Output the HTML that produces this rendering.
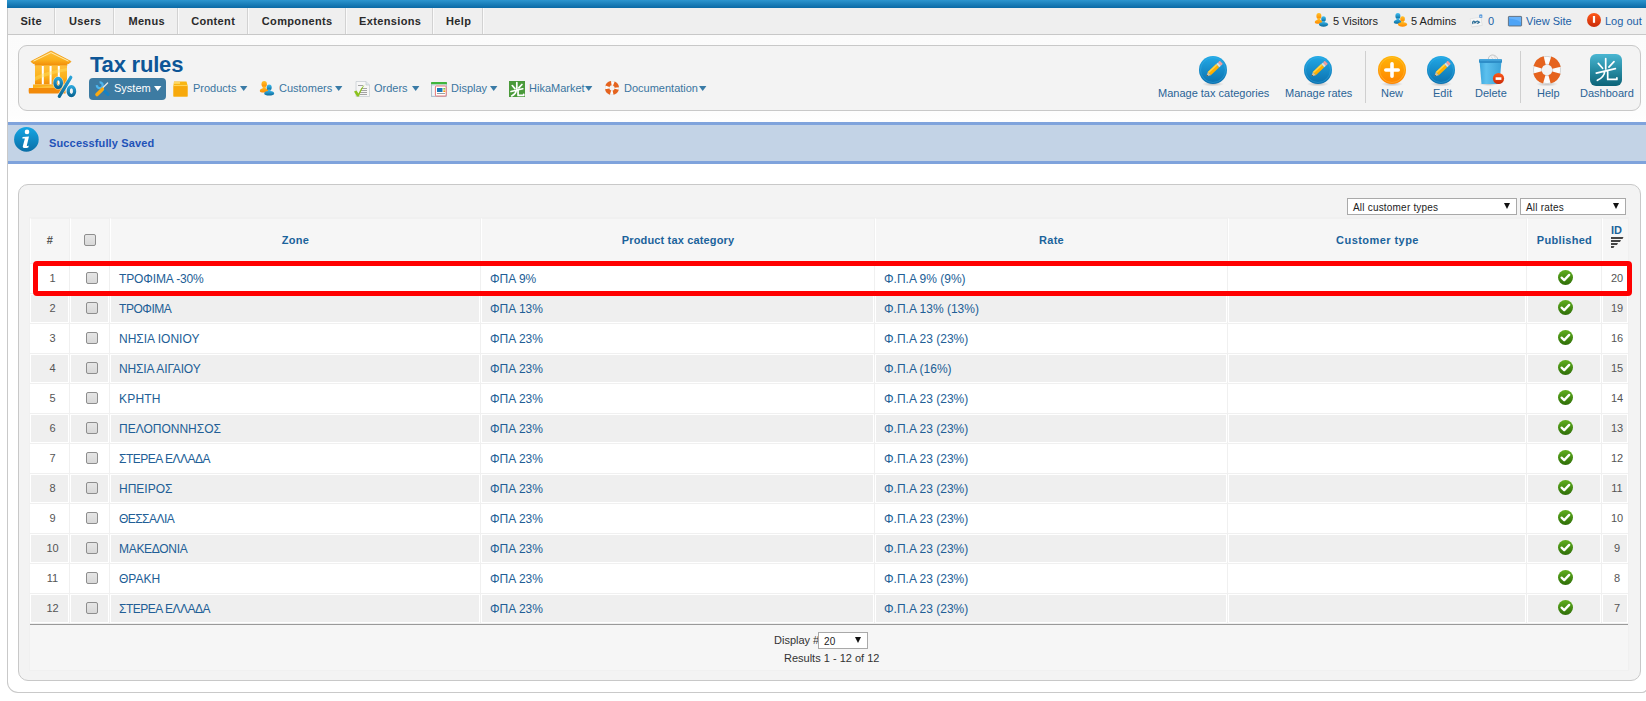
<!DOCTYPE html>
<html><head><meta charset="utf-8">
<style>
*{box-sizing:border-box}
html,body{margin:0;padding:0}
body{width:1646px;height:701px;overflow:hidden;position:relative;background:#fff;font-family:"Liberation Sans",sans-serif;font-size:11px;color:#333}
.abs{position:absolute}
.t{position:absolute;white-space:nowrap;line-height:11px}
svg.ic{position:absolute;overflow:visible}
#topbar{left:7px;top:0;width:1639px;height:8px;background:linear-gradient(#2c95cf,#0a69a5)}
#menubar{left:7px;top:8px;width:1639px;height:27px;background:#efefef;border-left:1px solid #c9c9c9;border-bottom:1px solid #c8c8c8}
.mi{position:absolute;top:0;height:26px;line-height:26px;font-weight:bold;font-size:11px;color:#2a2a2a;text-align:center;letter-spacing:0.35px;text-indent:0.35px}
.msep{position:absolute;top:0;height:26px;width:2px;border-left:1px solid #d2d2d2;border-right:1px solid #fafafa}
#outer{left:7px;top:35px;width:1641px;height:658px;border:1px solid #c9c9c9;border-top:none;border-radius:0 0 6px 11px;background:linear-gradient(#fbfbfb 0px,#fdfdfd 80px,#fff 90px)}
#hdr{left:18px;top:45px;width:1623px;height:66px;background:#f3f3f3;border:1px solid #c8c8c8;border-radius:9px}
#title{left:90px;top:54px;font-size:22px;font-weight:bold;color:#0d5697;letter-spacing:-0.2px;line-height:22px}
#sysbtn{left:89px;top:78px;width:77px;height:22px;background:#3d7ba2;border-radius:4px}
.sub{color:#3a75a0}
.tri{position:absolute;width:0;height:0;border-left:3.5px solid transparent;border-right:3.5px solid transparent;border-top:5px solid #3a7ba6}
.tb{color:#2a6396}
.tsep{position:absolute;top:51px;width:1px;height:52px;background:#cfcfcf}
#msg{left:8px;top:122px;width:1640px;height:42px;background:#c3d3e6;border-top:3px solid #7fa3dc;border-bottom:3px solid #7fa3dc}
#msgtext{left:49px;top:138px;font-size:11px;font-weight:bold;color:#1f52b8;letter-spacing:0.15px}
#box{left:18px;top:184px;width:1623px;height:497px;background:#f3f3f3;border:1px solid #c8c8c8;border-radius:10px}
.sel{position:absolute;height:17px;background:#fff;border:1px solid #a9a9a9;font-size:10px;color:#222;line-height:15px;padding-top:1px;padding-left:5px;letter-spacing:0.2px}
.sel .ar{position:absolute;right:6px;top:4px;width:0;height:0;border-left:3px solid transparent;border-right:3px solid transparent;border-top:6px solid #111}
table.al{position:absolute;left:29px;top:217px;width:1600px;border-collapse:separate;border-spacing:1px;table-layout:fixed;background:#f0f0f0}
table.al th{height:45px;background:#f6f6f6;border-left:1px solid #fff;border-top:1px solid #f0f0f0;padding:0 0 2px 0;font-size:11px;font-weight:bold;color:#1b639b;text-align:center;letter-spacing:0.3px}
table.al td{height:29px;border:1px solid #fff;padding:0;font-size:12px;vertical-align:middle}
table.al tr.r0 td{background:#fff}
table.al tr.r1 td{background:#efefef}
td.num{text-align:center;color:#555;font-size:11px!important;padding-left:6px!important;padding-bottom:2px!important}
td.c{text-align:center;padding-left:4px!important}
td.pub{text-align:center;padding-left:3px!important}
td.c .cb{position:relative;top:-1px}
td.pub svg{position:relative;top:-1px}
td.lk{color:#215e96;padding-left:8px!important}
td.id{text-align:center;color:#555;font-size:11px!important;padding-left:4px!important;padding-bottom:2px!important}
.cb{display:inline-block;width:12px;height:12px;border:1px solid #8e8e8e;border-radius:2px;background:linear-gradient(#e6e6e6,#d8d8d8);vertical-align:middle}
table.al td svg{vertical-align:middle;display:inline-block}
table.al tfoot td{height:46px;background:#f6f6f6;border:none;border-top:1px solid #9a9a9a;text-align:center;color:#333;font-size:11px}
#redbox{left:33px;top:261px;width:1599px;height:35px;border:5px solid #ff0000;border-radius:4px}
</style></head><body>
<svg width="0" height="0" style="position:absolute">
<defs>
<linearGradient id="gBlue" x1="0" y1="0" x2="0" y2="1"><stop offset="0" stop-color="#22a9e6"/><stop offset="1" stop-color="#0b70ae"/></linearGradient>
<linearGradient id="gOrange" x1="0" y1="0" x2="0" y2="1"><stop offset="0" stop-color="#ffb508"/><stop offset="1" stop-color="#ff8400"/></linearGradient>
<linearGradient id="gTeal" x1="0" y1="0" x2="0" y2="1"><stop offset="0" stop-color="#4ab6d2"/><stop offset="0.45" stop-color="#2a90a8"/><stop offset="1" stop-color="#0d6377"/></linearGradient>
<linearGradient id="gBank" x1="0" y1="0" x2="0" y2="1"><stop offset="0" stop-color="#ffbf3a"/><stop offset="0.6" stop-color="#fbb21c"/><stop offset="1" stop-color="#f28c08"/></linearGradient>
<linearGradient id="gPct" x1="0" y1="0" x2="0" y2="1"><stop offset="0" stop-color="#2aa3d8"/><stop offset="1" stop-color="#0b6896"/></linearGradient>
<linearGradient id="gRed" x1="0" y1="0" x2="0" y2="1"><stop offset="0" stop-color="#ff5a1a"/><stop offset="1" stop-color="#c92a08"/></linearGradient>
<linearGradient id="gTrash" x1="0" y1="0" x2="1" y2="0"><stop offset="0" stop-color="#3ba6dc"/><stop offset="0.3" stop-color="#5cc0ee"/><stop offset="1" stop-color="#3aa2d8"/></linearGradient>
<linearGradient id="gPB" x1="0" y1="0" x2="0" y2="1"><stop offset="0" stop-color="#3fc0f5"/><stop offset="1" stop-color="#0b6a9a"/></linearGradient>
<linearGradient id="gPO" x1="0" y1="0" x2="0" y2="1"><stop offset="0" stop-color="#ffc22a"/><stop offset="1" stop-color="#ff8a00"/></linearGradient>
<radialGradient id="gShadow" cx="0.5" cy="0.5" r="0.5"><stop offset="0" stop-color="#000" stop-opacity="0.22"/><stop offset="1" stop-color="#000" stop-opacity="0"/></radialGradient>
<symbol id="pencilC" viewBox="0 0 28 30">
 <ellipse cx="14" cy="28" rx="11" ry="2.5" fill="url(#gShadow)"/>
 <circle cx="14" cy="14" r="14" fill="url(#gBlue)"/>
 <circle cx="14" cy="14" r="12.5" fill="none" stroke="#44b8ec" stroke-opacity="0.35" stroke-width="1"/>
 <g transform="rotate(-43 14 14)">
  <rect x="8.9" y="11.9" width="11.5" height="4.4" fill="#ffb000"/>
  <rect x="8.9" y="11.9" width="11.5" height="1.6" fill="#ffd54a"/>
  <rect x="20.4" y="11.9" width="2.4" height="4.4" fill="#d4e2e2"/>
  <rect x="22.8" y="11.9" width="2.6" height="4.4" rx="0.6" fill="#f29c9c"/>
  <path d="M8.9 11.9 L4.9 14.1 L8.9 16.3Z" fill="#d8c49a"/>
  <path d="M6.4 13.3 L4.9 14.1 L6.4 14.9Z" fill="#333"/>
 </g>
</symbol>
<symbol id="people" viewBox="0 0 16 15">
 <g fill="url(#gPO)"><ellipse cx="5.2" cy="3.2" rx="2.7" ry="3.1"/><path d="M3.6 5.5 L6.8 5.5 L6.6 7.2 C8.4 7.6 9.2 8.6 9.2 10 C9.2 11.2 7.5 11.6 5 11.6 C2.5 11.6 0.8 11.2 0.8 10 C0.8 8.6 1.8 7.6 3.8 7.2Z"/></g>
 <g fill="url(#gPB)"><ellipse cx="10.2" cy="6.4" rx="2.5" ry="3"/><path d="M8.8 8.6 L11.6 8.6 L11.4 10 C13.6 10.3 15.2 11.2 15.2 12.4 C15.2 13.8 13 14.6 10.2 14.6 C7.4 14.6 5.2 13.8 5.2 12.4 C5.2 11.2 6.8 10.3 9 10Z"/></g>
</symbol>
<symbol id="people2" viewBox="0 0 16 15">
 <g fill="url(#gPB)"><ellipse cx="5.2" cy="3.2" rx="2.7" ry="3.1"/><path d="M3.6 5.5 L6.8 5.5 L6.6 7.2 C8.4 7.6 9.2 8.6 9.2 10 C9.2 11.2 7.5 11.6 5 11.6 C2.5 11.6 0.8 11.2 0.8 10 C0.8 8.6 1.8 7.6 3.8 7.2Z"/></g>
 <g fill="url(#gPO)"><ellipse cx="10.2" cy="6.4" rx="2.5" ry="3"/><path d="M8.8 8.6 L11.6 8.6 L11.4 10 C13.6 10.3 15.2 11.2 15.2 12.4 C15.2 13.8 13 14.6 10.2 14.6 C7.4 14.6 5.2 13.8 5.2 12.4 C5.2 11.2 6.8 10.3 9 10Z"/></g>
</symbol>
<symbol id="buoy" viewBox="0 0 28 28">
 <circle cx="14" cy="14" r="9.8" fill="none" stroke="#fcfcfc" stroke-width="8.4"/>
 <circle cx="14" cy="14" r="13.7" fill="none" stroke="#d2d2d2" stroke-width="1"/>
 <circle cx="14" cy="14" r="5.7" fill="none" stroke="#d6d6d6" stroke-width="1"/>
 <circle cx="14" cy="14" r="9.8" fill="none" stroke="#e5631e" stroke-width="8.6" stroke-dasharray="10 5.4" stroke-dashoffset="-2.7"/>
</symbol>
<symbol id="hika" viewBox="0 0 32 32">
 <path d="M15.7 4.6 L15.7 15 M8.3 9.4 L12.6 14.3 M24 7.7 L18.9 13.1 M6.3 19.1 L25.4 14.6 M14.8 17.2 C14.5 21 12 24 7.4 26.3 M17.7 17.7 L17.7 25.4 L26.9 25.4 L26.9 23.8" stroke="#fff" stroke-width="1.7" fill="none" stroke-linecap="round" stroke-linejoin="round"/>
</symbol>
<symbol id="hikaS" viewBox="0 0 32 32">
 <path d="M15.7 4.6 L15.7 15 M8.3 9.4 L12.6 14.3 M24 7.7 L18.9 13.1 M6.3 19.1 L25.4 14.6 M14.8 17.2 C14.5 21 12 24 7.4 26.3 M17.7 17.7 L17.7 25.4 L26.9 25.4 L26.9 23.8" stroke="#fff" stroke-width="2.8" fill="none" stroke-linecap="round" stroke-linejoin="round"/>
</symbol>
</defs>
</svg>

<div id="topbar" class="abs"></div>
<div id="menubar" class="abs">
  <div class="mi" style="left:0;width:46px">Site</div><div class="msep" style="left:46px"></div>
  <div class="mi" style="left:48px;width:58px">Users</div><div class="msep" style="left:105px"></div>
  <div class="mi" style="left:107px;width:63px">Menus</div><div class="msep" style="left:169px"></div>
  <div class="mi" style="left:171px;width:68px">Content</div><div class="msep" style="left:239px"></div>
  <div class="mi" style="left:241px;width:96px">Components</div><div class="msep" style="left:337px"></div>
  <div class="mi" style="left:339px;width:86px">Extensions</div><div class="msep" style="left:424px"></div>
  <div class="mi" style="left:426px;width:49px">Help</div><div class="msep" style="left:474px"></div>
</div>
<!-- status -->
<svg class="ic" style="left:1314px;top:13px" width="15" height="14"><use href="#people"/></svg>
<div class="t" style="left:1333px;top:16px;color:#222">5 Visitors</div>
<svg class="ic" style="left:1393px;top:13px" width="15" height="14"><use href="#people2"/></svg>
<div class="t" style="left:1411px;top:16px;color:#222">5 Admins</div>
<svg class="ic" style="left:1469px;top:14px" width="15" height="14" viewBox="0 0 15 14">
 <path d="M1.2 4.8 L11.8 3.2 L13.2 11.2 L2.6 12.8Z" fill="#d8d8d8" opacity="0.6" transform="translate(0.4 0.6)"/>
 <path d="M1.2 4.8 L11.8 3.2 L13.2 11.2 L2.6 12.8Z" fill="#f7f7f7" stroke="#dadada" stroke-width="0.5"/>
 <path d="M3.8 9.6 C3.2 8 4.2 6.8 5.4 7.2 C6.4 7.5 6 8.8 5.2 8.8 M6.6 8.6 C6.8 7.2 8.6 6.6 9.4 7.6 C10 8.4 9.2 9.4 8.2 9.2 M9.8 8.4 L10.6 8.2" stroke="#2b6d96" stroke-width="1.2" fill="none" stroke-linecap="round"/>
 <rect x="10.3" y="0.6" width="3" height="3.2" rx="0.4" fill="#4a90d8"/>
 <rect x="11.2" y="1.8" width="1.2" height="1" fill="#fff"/>
</svg>
<div class="t" style="left:1488px;top:16px;color:#1b5fa6">0</div>
<svg class="ic" style="left:1508px;top:16px" width="14" height="11" viewBox="0 0 14 11">
 <rect x="0.4" y="0.4" width="13.2" height="9.6" rx="0.6" fill="#4ea4f6" stroke="#555f6a" stroke-width="0.8"/>
 <path d="M1 1 L13 1 L13 6.5 C10 4 6 3 1 2.6Z" fill="#78bcff" opacity="0.6"/>
</svg>
<div class="t" style="left:1526px;top:16px;color:#1b5fa6">View Site</div>
<svg class="ic" style="left:1587px;top:13px" width="14" height="14" viewBox="0 0 14 14">
 <circle cx="7" cy="7" r="7" fill="url(#gRed)"/>
 <rect x="5.9" y="3" width="2.2" height="6.8" fill="#fff"/>
</svg>
<div class="t" style="left:1605px;top:16px;color:#1b5fa6">Log out</div>

<div id="outer" class="abs"></div>
<div id="hdr" class="abs"></div>
<!-- bank icon -->
<svg class="ic" style="left:24px;top:48px" width="56" height="52" viewBox="0 0 56 52">
 <path d="M27 3 L47 13.5 L45 15.5 L43 15.5 L43 17.5 L11 17.5 L11 15.5 L9 15.5 L7 13.5Z" fill="url(#gBank)" stroke="#f09a10" stroke-width="0.8"/>
 <path d="M9.5 13.2 L27 4.6 L44.5 13.2" stroke="#fff2c0" stroke-width="0.9" fill="none"/>
 <rect x="11" y="17.5" width="32" height="19" fill="url(#gBank)"/>
 <rect x="17.8" y="18" width="2" height="18.5" fill="#fff"/>
 <rect x="25.6" y="18" width="2" height="18.5" fill="#fff"/>
 <rect x="33.8" y="18" width="2" height="18.5" fill="#fff"/>
 <path d="M11 29 C20 24 32 22 43 20 L43 23 C32 25 20 28 11 33Z" fill="#ffe060" opacity="0.45"/>
 <path d="M9 36.5 L42 36.5 L42 40 L9 40Z" fill="#fbb01a"/>
 <path d="M5 40 L41.5 40 L41.5 45.6 L5 45.6 C4.5 43 4.5 42 5 40Z" fill="#f28a0a"/>
 <path d="M9 40 C20 38 30 37 42 36.5 L42 40 Z" fill="#ffc84a" opacity="0.6"/>
 <g fill="none" stroke="#fff" stroke-opacity="0.55" stroke-width="4.6">
  <ellipse cx="34.2" cy="35" rx="3.2" ry="4.5"/>
  <ellipse cx="47.4" cy="43.2" rx="3.2" ry="4.5"/>
  <path d="M46.8 29.3 L35.3 48.3"/>
 </g>
 <g fill="none" stroke="url(#gPct)" stroke-width="3.3">
  <ellipse cx="34.2" cy="35" rx="3.2" ry="4.5"/>
  <ellipse cx="47.4" cy="43.2" rx="3.2" ry="4.5"/>
 </g>
 <path d="M46.8 29.3 L35.3 48.3" stroke="url(#gPct)" stroke-width="3.2" stroke-linecap="round"/>
</svg>
<div id="title" class="abs">Tax rules</div>
<div id="sysbtn" class="abs"></div>
<svg class="ic" style="left:93px;top:80px" width="20" height="18" viewBox="0 0 20 18">
 <path d="M8.6 8.2 L15 14.4" stroke="#1682c4" stroke-width="3.2" stroke-linecap="round"/>
 <path d="M6.55 2.4 A2.9 2.9 0 1 1 3.9 5.05" stroke="#4db6ee" stroke-width="2.3" fill="none"/>
 <path d="M9.8 7.8 L14.6 3" stroke="#e6e6e6" stroke-width="1.3" stroke-linecap="round"/>
 <path d="M4 14.6 L9.4 9.2" stroke="#fcaa10" stroke-width="3.6" stroke-linecap="round"/>
</svg>
<div class="t" style="left:114px;top:83px;color:#fff">System</div>
<svg class="ic" style="left:154px;top:86px" width="8" height="5" viewBox="0 0 8 5"><path d="M0 0 H7.4 L3.7 5Z" fill="#fff"/></svg>

<!-- submenu -->
<svg class="ic" style="left:173px;top:81px" width="16" height="16" viewBox="0 0 16 16">
 <path d="M1 0.5 L13.5 0.5 L14.5 4 L14.5 15.5 L0.5 15.5 L0.5 4Z" fill="#f9b714"/>
 <rect x="0.5" y="4" width="14" height="1.2" fill="#ffd45a"/>
 <rect x="0.5" y="5.2" width="14" height="10.3" fill="#f7a90c"/>
 <rect x="1" y="1.2" width="6" height="1.5" fill="#ffe07a"/>
</svg>
<div class="t sub" style="left:193px;top:83px">Products</div>
<svg class="ic" style="left:240px;top:86px" width="8" height="5" viewBox="0 0 8 5"><path d="M0 0 H7.4 L3.7 5Z" fill="#3a7ba6"/></svg>
<svg class="ic" style="left:259px;top:81px" width="16" height="15"><use href="#people"/></svg>
<div class="t sub" style="left:279px;top:83px">Customers</div>
<svg class="ic" style="left:335px;top:86px" width="8" height="5" viewBox="0 0 8 5"><path d="M0 0 H7.4 L3.7 5Z" fill="#3a7ba6"/></svg>
<svg class="ic" style="left:353px;top:81px" width="17" height="16" viewBox="0 0 17 16">
 <path d="M3 0.5 L13 0.5 L16.5 4 L16.5 15.5 L3 15.5Z" fill="#f6f6f6" stroke="#c9cfd4" stroke-width="0.8"/>
 <path d="M13 0.5 L13 4 L16.5 4" fill="#dfe8ea" stroke="#b8c4c8" stroke-width="0.6"/>
 <g stroke="#9a9a9a" stroke-width="0.9"><path d="M5 4.5 H10"/><path d="M8 7.5 H14"/><path d="M8 9.5 H14"/><path d="M7 11.5 H14"/><path d="M7 13.5 H14"/></g>
 <path d="M1 10.5 L3.5 9.5 L5.5 12.5 C7 9 9 6 11.5 3.8 C9.5 7.5 7.5 11 6 15.5 L4 15.5Z" fill="#8cc21e"/>
</svg>
<div class="t sub" style="left:374px;top:83px">Orders</div>
<svg class="ic" style="left:412px;top:86px" width="8" height="5" viewBox="0 0 8 5"><path d="M0 0 H7.4 L3.7 5Z" fill="#3a7ba6"/></svg>
<svg class="ic" style="left:431px;top:82px" width="16" height="15" viewBox="0 0 16 15">
 <rect x="0.5" y="1" width="15" height="13.5" fill="#d8e4ec" stroke="#9cb0c0" stroke-width="0.7"/>
 <rect x="0" y="0" width="16" height="2.2" rx="0.8" fill="#3fb53c"/>
 <rect x="1.2" y="4" width="3" height="9.5" fill="#f4f8fa"/>
 <rect x="4.4" y="4" width="10.8" height="10" rx="1" fill="#fff" stroke="#e87878" stroke-width="1"/>
 <rect x="6" y="6" width="5.5" height="4" fill="#1a78b8"/>
 <rect x="12.3" y="6" width="2" height="1.6" fill="#7cc84c"/>
 <rect x="12.3" y="8.4" width="2" height="1.6" fill="#f09a10"/>
 <rect x="6" y="11" width="8" height="0.8" fill="#888"/>
</svg>
<div class="t sub" style="left:451px;top:83px">Display</div>
<svg class="ic" style="left:490px;top:86px" width="8" height="5" viewBox="0 0 8 5"><path d="M0 0 H7.4 L3.7 5Z" fill="#3a7ba6"/></svg>
<svg class="ic" style="left:509px;top:81px" width="16" height="16" viewBox="0 0 16 16">
 <rect x="0" y="0" width="16" height="16" fill="#4a9a3a"/>
 <svg x="0" y="0" width="16" height="16" viewBox="3 2 26 26"><use href="#hikaS" width="32" height="32"/></svg>
</svg>
<div class="t sub" style="left:529px;top:83px">HikaMarket</div>
<svg class="ic" style="left:585px;top:86px" width="8" height="5" viewBox="0 0 8 5"><path d="M0 0 H7.4 L3.7 5Z" fill="#3a7ba6"/></svg>
<svg class="ic" style="left:605px;top:81px" width="14" height="14"><use href="#buoy"/></svg>
<div class="t sub" style="left:624px;top:83px">Documentation</div>
<svg class="ic" style="left:699px;top:86px" width="8" height="5" viewBox="0 0 8 5"><path d="M0 0 H7.4 L3.7 5Z" fill="#3a7ba6"/></svg>

<!-- toolbar -->
<svg class="ic" style="left:1199px;top:56px" width="28" height="30"><use href="#pencilC"/></svg>
<div class="t tb" style="left:1158px;top:88px">Manage tax categories</div>
<svg class="ic" style="left:1304px;top:56px" width="28" height="30"><use href="#pencilC"/></svg>
<div class="t tb" style="left:1285px;top:88px">Manage rates</div>
<div class="tsep" style="left:1365px"></div>
<svg class="ic" style="left:1378px;top:56px" width="28" height="30" viewBox="0 0 28 30">
 <ellipse cx="14" cy="28" rx="11" ry="2.5" fill="url(#gShadow)"/>
 <circle cx="14" cy="14" r="14" fill="url(#gOrange)"/>
 <circle cx="14" cy="14" r="12.5" fill="none" stroke="#ffd060" stroke-opacity="0.35" stroke-width="1"/>
 <path d="M14 7.8 V20.2 M7.8 14 H20.2" stroke="#fff" stroke-width="3.6" stroke-linecap="round"/>
</svg>
<div class="t tb" style="left:1381px;top:88px">New</div>
<svg class="ic" style="left:1427px;top:56px" width="28" height="30"><use href="#pencilC"/></svg>
<div class="t tb" style="left:1433px;top:88px">Edit</div>
<svg class="ic" style="left:1477px;top:53px" width="28" height="33" viewBox="0 0 28 33">
 <ellipse cx="12" cy="31" rx="10" ry="2" fill="url(#gShadow)"/>
 <path d="M11.5 7 C11 4 13 1.8 16 2 C18.5 2.3 20.5 4 21 7Z" fill="#f4f4f4" stroke="#b9b9b9" stroke-width="0.8"/><path d="M14 3.5 L16 6 M17 3 L18.5 5.5" stroke="#c8c8c8" stroke-width="0.6"/>
 <path d="M2.5 7.5 L24.5 7.5 L22.5 31 L4.5 31Z" fill="url(#gTrash)"/>
 <rect x="2" y="6" width="23" height="4" rx="1.2" fill="#2e8ec8"/>
 <rect x="3" y="6.3" width="21" height="1.2" fill="#55b4e8"/>
 <circle cx="21.5" cy="25.5" r="5.6" fill="url(#gRed)"/>
 <rect x="18.6" y="24.3" width="5.8" height="2.6" fill="#fff"/>
</svg>
<div class="t tb" style="left:1475px;top:88px">Delete</div>
<div class="tsep" style="left:1520px"></div>
<svg class="ic" style="left:1533px;top:56px" width="28" height="30" viewBox="0 0 28 30">
 <ellipse cx="14" cy="28" rx="11" ry="2.5" fill="url(#gShadow)"/>
 <use href="#buoy" width="28" height="28"/>
</svg>
<div class="t tb" style="left:1537px;top:88px">Help</div>
<svg class="ic" style="left:1590px;top:54px" width="32" height="32" viewBox="0 0 32 32">
 <rect x="0" y="0" width="32" height="32" rx="6" fill="url(#gTeal)"/>
 <use href="#hika" width="32" height="32"/>
</svg>
<div class="t tb" style="left:1580px;top:88px">Dashboard</div>

<div id="msg" class="abs"></div>
<svg class="ic" style="left:14px;top:127px" width="25" height="25" viewBox="0 0 25 25">
 <defs><linearGradient id="gInfo" x1="0" y1="0" x2="0" y2="1"><stop offset="0" stop-color="#14a6e4"/><stop offset="1" stop-color="#0a6ea6"/></linearGradient></defs>
 <circle cx="12.4" cy="12.4" r="12.3" fill="url(#gInfo)"/>
 <circle cx="13" cy="4.9" r="2.3" fill="#fff"/>
 <path d="M8.6 9.9 L15 9.4 L12.8 18.6 C12.7 19.2 13.3 19.2 14.8 18.4 L14.3 20.4 C12.5 21 10.5 21.2 9.4 20.7 C8.6 20.3 8.7 19.6 9 18.5 L10.9 11.6 L8.3 11.5Z" fill="#fff"/>
</svg>
<div id="msgtext" class="abs t">Successfully Saved</div>
<div id="box" class="abs"></div>
<div class="sel" style="left:1347px;top:198px;width:170px">All customer types<span class="ar"></span></div>
<div class="sel" style="left:1520px;top:198px;width:106px">All rates<span class="ar"></span></div>
<table class="al">
<colgroup><col style="width:39px"><col style="width:39px"><col style="width:370px"><col style="width:393px"><col style="width:352px"><col style="width:298px"><col style="width:74px"><col style="width:26px"></colgroup>
<thead><tr><th style="color:#555">#</th><th><span class="cb" style="position:relative;top:-1px"></span></th><th>Zone</th><th style="letter-spacing:0.15px">Product tax category</th><th>Rate</th><th style="letter-spacing:0.45px">Customer type</th><th>Published</th><th></th></tr></thead>
<tfoot><tr><td colspan="8"></td></tr></tfoot>
<tbody>
<tr class="r0"><td class="num">1</td><td class="c"><span class="cb"></span></td><td class="lk" style="letter-spacing:-0.14px">ΤΡΟΦΙΜΑ -30%</td><td class="lk">ΦΠΑ 9%</td><td class="lk">Φ.Π.Α 9% (9%)</td><td></td><td class="pub"><svg width="15" height="15" viewBox="0 0 15 15"><defs><linearGradient id="gg" x1="0" y1="0" x2="0" y2="1"><stop offset="0" stop-color="#5fae1f"/><stop offset="1" stop-color="#2f6e08"/></linearGradient></defs><circle cx="7.5" cy="7.5" r="7.5" fill="url(#gg)"/><path d="M3.6 7.6 L6.2 10.1 L11.2 4.9" stroke="#fff" stroke-width="2.3" fill="none" stroke-linecap="round" stroke-linejoin="round"/></svg></td><td class="id">20</td></tr>
<tr class="r1"><td class="num">2</td><td class="c"><span class="cb"></span></td><td class="lk" style="letter-spacing:-0.45px">ΤΡΟΦΙΜΑ</td><td class="lk">ΦΠΑ 13%</td><td class="lk">Φ.Π.Α 13% (13%)</td><td></td><td class="pub"><svg width="15" height="15" viewBox="0 0 15 15"><defs><linearGradient id="gg" x1="0" y1="0" x2="0" y2="1"><stop offset="0" stop-color="#5fae1f"/><stop offset="1" stop-color="#2f6e08"/></linearGradient></defs><circle cx="7.5" cy="7.5" r="7.5" fill="url(#gg)"/><path d="M3.6 7.6 L6.2 10.1 L11.2 4.9" stroke="#fff" stroke-width="2.3" fill="none" stroke-linecap="round" stroke-linejoin="round"/></svg></td><td class="id">19</td></tr>
<tr class="r0"><td class="num">3</td><td class="c"><span class="cb"></span></td><td class="lk">ΝΗΣΙΑ ΙΟΝΙΟΥ</td><td class="lk">ΦΠΑ 23%</td><td class="lk">Φ.Π.Α 23 (23%)</td><td></td><td class="pub"><svg width="15" height="15" viewBox="0 0 15 15"><defs><linearGradient id="gg" x1="0" y1="0" x2="0" y2="1"><stop offset="0" stop-color="#5fae1f"/><stop offset="1" stop-color="#2f6e08"/></linearGradient></defs><circle cx="7.5" cy="7.5" r="7.5" fill="url(#gg)"/><path d="M3.6 7.6 L6.2 10.1 L11.2 4.9" stroke="#fff" stroke-width="2.3" fill="none" stroke-linecap="round" stroke-linejoin="round"/></svg></td><td class="id">16</td></tr>
<tr class="r1"><td class="num">4</td><td class="c"><span class="cb"></span></td><td class="lk" style="letter-spacing:-0.13px">ΝΗΣΙΑ ΑΙΓΑΙΟΥ</td><td class="lk">ΦΠΑ 23%</td><td class="lk">Φ.Π.Α (16%)</td><td></td><td class="pub"><svg width="15" height="15" viewBox="0 0 15 15"><defs><linearGradient id="gg" x1="0" y1="0" x2="0" y2="1"><stop offset="0" stop-color="#5fae1f"/><stop offset="1" stop-color="#2f6e08"/></linearGradient></defs><circle cx="7.5" cy="7.5" r="7.5" fill="url(#gg)"/><path d="M3.6 7.6 L6.2 10.1 L11.2 4.9" stroke="#fff" stroke-width="2.3" fill="none" stroke-linecap="round" stroke-linejoin="round"/></svg></td><td class="id">15</td></tr>
<tr class="r0"><td class="num">5</td><td class="c"><span class="cb"></span></td><td class="lk" style="letter-spacing:0.2px">ΚΡΗΤΗ</td><td class="lk">ΦΠΑ 23%</td><td class="lk">Φ.Π.Α 23 (23%)</td><td></td><td class="pub"><svg width="15" height="15" viewBox="0 0 15 15"><defs><linearGradient id="gg" x1="0" y1="0" x2="0" y2="1"><stop offset="0" stop-color="#5fae1f"/><stop offset="1" stop-color="#2f6e08"/></linearGradient></defs><circle cx="7.5" cy="7.5" r="7.5" fill="url(#gg)"/><path d="M3.6 7.6 L6.2 10.1 L11.2 4.9" stroke="#fff" stroke-width="2.3" fill="none" stroke-linecap="round" stroke-linejoin="round"/></svg></td><td class="id">14</td></tr>
<tr class="r1"><td class="num">6</td><td class="c"><span class="cb"></span></td><td class="lk">ΠΕΛΟΠΟΝΝΗΣΟΣ</td><td class="lk">ΦΠΑ 23%</td><td class="lk">Φ.Π.Α 23 (23%)</td><td></td><td class="pub"><svg width="15" height="15" viewBox="0 0 15 15"><defs><linearGradient id="gg" x1="0" y1="0" x2="0" y2="1"><stop offset="0" stop-color="#5fae1f"/><stop offset="1" stop-color="#2f6e08"/></linearGradient></defs><circle cx="7.5" cy="7.5" r="7.5" fill="url(#gg)"/><path d="M3.6 7.6 L6.2 10.1 L11.2 4.9" stroke="#fff" stroke-width="2.3" fill="none" stroke-linecap="round" stroke-linejoin="round"/></svg></td><td class="id">13</td></tr>
<tr class="r0"><td class="num">7</td><td class="c"><span class="cb"></span></td><td class="lk" style="letter-spacing:-0.5px">ΣΤΕΡΕΑ ΕΛΛΑΔΑ</td><td class="lk">ΦΠΑ 23%</td><td class="lk">Φ.Π.Α 23 (23%)</td><td></td><td class="pub"><svg width="15" height="15" viewBox="0 0 15 15"><defs><linearGradient id="gg" x1="0" y1="0" x2="0" y2="1"><stop offset="0" stop-color="#5fae1f"/><stop offset="1" stop-color="#2f6e08"/></linearGradient></defs><circle cx="7.5" cy="7.5" r="7.5" fill="url(#gg)"/><path d="M3.6 7.6 L6.2 10.1 L11.2 4.9" stroke="#fff" stroke-width="2.3" fill="none" stroke-linecap="round" stroke-linejoin="round"/></svg></td><td class="id">12</td></tr>
<tr class="r1"><td class="num">8</td><td class="c"><span class="cb"></span></td><td class="lk">ΗΠΕΙΡΟΣ</td><td class="lk">ΦΠΑ 23%</td><td class="lk">Φ.Π.Α 23 (23%)</td><td></td><td class="pub"><svg width="15" height="15" viewBox="0 0 15 15"><defs><linearGradient id="gg" x1="0" y1="0" x2="0" y2="1"><stop offset="0" stop-color="#5fae1f"/><stop offset="1" stop-color="#2f6e08"/></linearGradient></defs><circle cx="7.5" cy="7.5" r="7.5" fill="url(#gg)"/><path d="M3.6 7.6 L6.2 10.1 L11.2 4.9" stroke="#fff" stroke-width="2.3" fill="none" stroke-linecap="round" stroke-linejoin="round"/></svg></td><td class="id">11</td></tr>
<tr class="r0"><td class="num">9</td><td class="c"><span class="cb"></span></td><td class="lk" style="letter-spacing:-0.55px">ΘΕΣΣΑΛΙΑ</td><td class="lk">ΦΠΑ 23%</td><td class="lk">Φ.Π.Α 23 (23%)</td><td></td><td class="pub"><svg width="15" height="15" viewBox="0 0 15 15"><defs><linearGradient id="gg" x1="0" y1="0" x2="0" y2="1"><stop offset="0" stop-color="#5fae1f"/><stop offset="1" stop-color="#2f6e08"/></linearGradient></defs><circle cx="7.5" cy="7.5" r="7.5" fill="url(#gg)"/><path d="M3.6 7.6 L6.2 10.1 L11.2 4.9" stroke="#fff" stroke-width="2.3" fill="none" stroke-linecap="round" stroke-linejoin="round"/></svg></td><td class="id">10</td></tr>
<tr class="r1"><td class="num">10</td><td class="c"><span class="cb"></span></td><td class="lk" style="letter-spacing:-0.3px">ΜΑΚΕΔΟΝΙΑ</td><td class="lk">ΦΠΑ 23%</td><td class="lk">Φ.Π.Α 23 (23%)</td><td></td><td class="pub"><svg width="15" height="15" viewBox="0 0 15 15"><defs><linearGradient id="gg" x1="0" y1="0" x2="0" y2="1"><stop offset="0" stop-color="#5fae1f"/><stop offset="1" stop-color="#2f6e08"/></linearGradient></defs><circle cx="7.5" cy="7.5" r="7.5" fill="url(#gg)"/><path d="M3.6 7.6 L6.2 10.1 L11.2 4.9" stroke="#fff" stroke-width="2.3" fill="none" stroke-linecap="round" stroke-linejoin="round"/></svg></td><td class="id">9</td></tr>
<tr class="r0"><td class="num">11</td><td class="c"><span class="cb"></span></td><td class="lk">ΘΡΑΚΗ</td><td class="lk">ΦΠΑ 23%</td><td class="lk">Φ.Π.Α 23 (23%)</td><td></td><td class="pub"><svg width="15" height="15" viewBox="0 0 15 15"><defs><linearGradient id="gg" x1="0" y1="0" x2="0" y2="1"><stop offset="0" stop-color="#5fae1f"/><stop offset="1" stop-color="#2f6e08"/></linearGradient></defs><circle cx="7.5" cy="7.5" r="7.5" fill="url(#gg)"/><path d="M3.6 7.6 L6.2 10.1 L11.2 4.9" stroke="#fff" stroke-width="2.3" fill="none" stroke-linecap="round" stroke-linejoin="round"/></svg></td><td class="id">8</td></tr>
<tr class="r1"><td class="num">12</td><td class="c"><span class="cb"></span></td><td class="lk" style="letter-spacing:-0.5px">ΣΤΕΡΕΑ ΕΛΛΑΔΑ</td><td class="lk">ΦΠΑ 23%</td><td class="lk">Φ.Π.Α 23 (23%)</td><td></td><td class="pub"><svg width="15" height="15" viewBox="0 0 15 15"><defs><linearGradient id="gg" x1="0" y1="0" x2="0" y2="1"><stop offset="0" stop-color="#5fae1f"/><stop offset="1" stop-color="#2f6e08"/></linearGradient></defs><circle cx="7.5" cy="7.5" r="7.5" fill="url(#gg)"/><path d="M3.6 7.6 L6.2 10.1 L11.2 4.9" stroke="#fff" stroke-width="2.3" fill="none" stroke-linecap="round" stroke-linejoin="round"/></svg></td><td class="id">7</td></tr>
</tbody>
</table>
<div class="t" style="left:1611px;top:225px;font-weight:bold;color:#1b639b">ID</div>
<svg class="ic" style="left:1611px;top:237px" width="13" height="12" viewBox="0 0 13 12">
 <path d="M0 0 H12.5 L11.5 2 H0Z M0 3 H10 L9 5 H0Z M0 6 H7 L6 8 H0Z M0 9 H3.5 L2.5 11 H0Z" fill="#444"/>
</svg>
<div class="t" style="left:774px;top:635px;color:#333">Display #</div>
<div class="sel" style="left:818px;top:632px;width:50px;font-size:10px">20<span class="ar"></span></div>
<div class="t" style="left:784px;top:653px;color:#333">Results 1 - 12 of 12</div>
<div id="redbox" class="abs"></div>
</body></html>
